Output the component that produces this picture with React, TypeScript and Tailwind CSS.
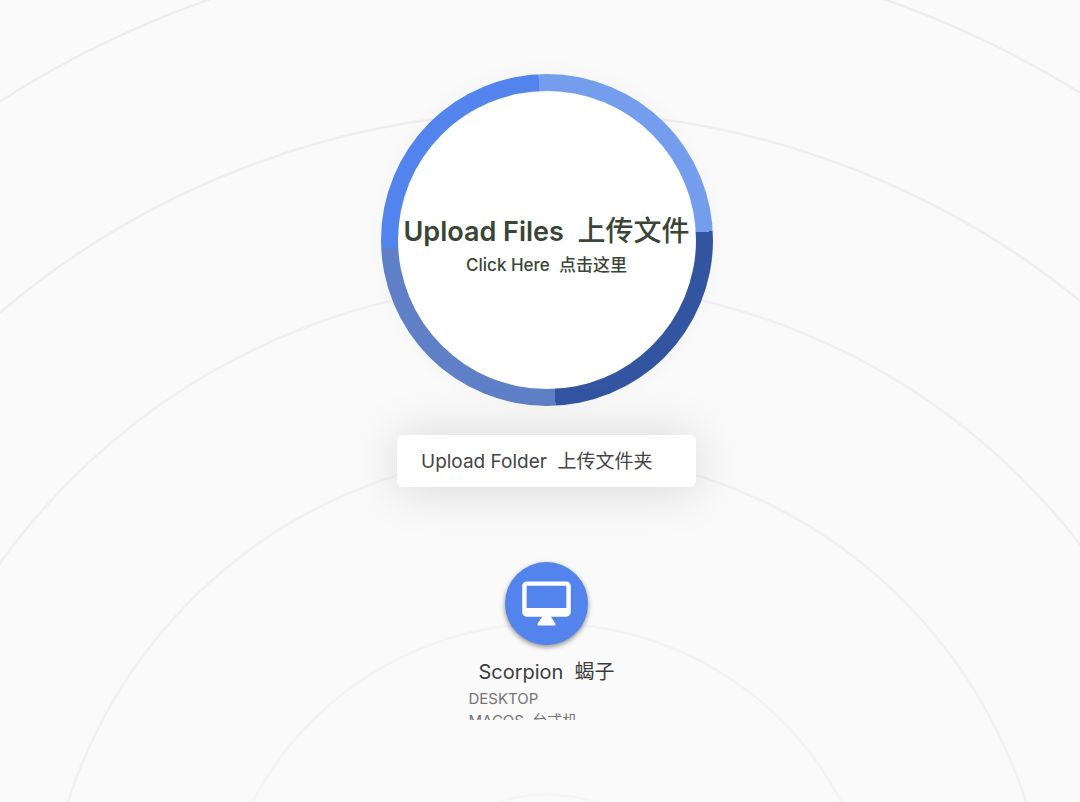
const rings = [
  { r: 161, color: '#f5f5f5' },
  { r: 332, color: '#f3f3f3' },
  { r: 503, color: '#f1f1f1' },
  { r: 673, color: '#f0f0f0' },
  { r: 844, color: '#eeeeee' },
  { r: 1014, color: '#ededed' },
];

function Ripples() {
  return (
    <svg
      className="absolute left-1/2 top-0 -translate-x-1/2 pointer-events-none"
      width="2100"
      height="802"
      viewBox="-1050 0 2100 802"
      fill="none"
      aria-hidden="true"
    >
      {rings.map(ring => (
        <circle key={ring.r} cx="0" cy="955.5" r={ring.r} stroke={ring.color} strokeWidth="2.5" />
      ))}
    </svg>
  );
}

function DesktopIcon() {
  return (
    <svg className="size-[53px]" viewBox="0 0 24 24" fill="currentColor" aria-hidden="true">
      <path d="M21 2H3c-1.1 0-2 .9-2 2v12c0 1.1.9 2 2 2h7l-2 3v1h8v-1l-2-3h7c1.1 0 2-.9 2-2V4c0-1.1-.9-2-2-2zm0 12H3V4h18v10z" />
    </svg>
  );
}

function UploadFiles() {
  return (
    <button className="size-[332px] shrink-0 rounded-full p-[17px] bg-[conic-gradient(from_-3deg,#749dee_0_25%,#3354a1_25%_50%,#5f80c6_50%_75%,#5383ec_75%)] shadow-[0_0_24px_rgba(0,0,0,0.03)]">
      <span className="flex size-full flex-col items-center justify-center rounded-full bg-white pt-3 text-[#3a4536] whitespace-pre">
        <span className="text-[27px] leading-9 font-semibold">
          Upload Files  <span className="text-[28px] font-medium">上传文件</span>
        </span>
        <span className="text-[17px] leading-[30px] font-medium">Click Here  点击这里</span>
      </span>
    </button>
  );
}

function UploadFolder() {
  return (
    <button className="mt-[29px] h-[52px] w-[299px] shrink-0 rounded-md bg-white px-6 pt-0.5 text-left text-[19px] text-[#444] whitespace-pre shadow-[0_2px_50px_rgba(0,0,0,0.15)]">
      Upload Folder  上传文件夹
    </button>
  );
}

function Device() {
  return (
    <div className="mt-[75px] flex w-[156px] flex-col items-center whitespace-pre">
      <button
        aria-label="Scorpion"
        className="flex size-[83px] shrink-0 items-center justify-center rounded-full bg-[#5383ec] text-white shadow-[0_2px_5px_rgba(0,0,0,0.45)]"
      >
        <DesktopIcon />
      </button>
      <div className="mt-[13px] text-xl leading-7 text-[#3c3c3c]">Scorpion  蝎子</div>
      <div className="mt-0.5 h-8 w-full shrink-0 overflow-hidden text-[15px] leading-[22px] text-[#757575]">
        <div>DESKTOP</div>
        <div>MACOS  台式机</div>
      </div>
    </div>
  );
}

export default function App() {
  return (
    <div className="min-h-screen overflow-hidden bg-[#fafafa] font-['Inter','Noto_Sans_CJK_SC',sans-serif]">
      <main className="relative ml-[13px] flex min-h-screen flex-col items-center pt-[74px]">
        <Ripples />
        <div className="relative flex flex-col items-center">
          <UploadFiles />
          <UploadFolder />
          <Device />
        </div>
      </main>
    </div>
  );
}
